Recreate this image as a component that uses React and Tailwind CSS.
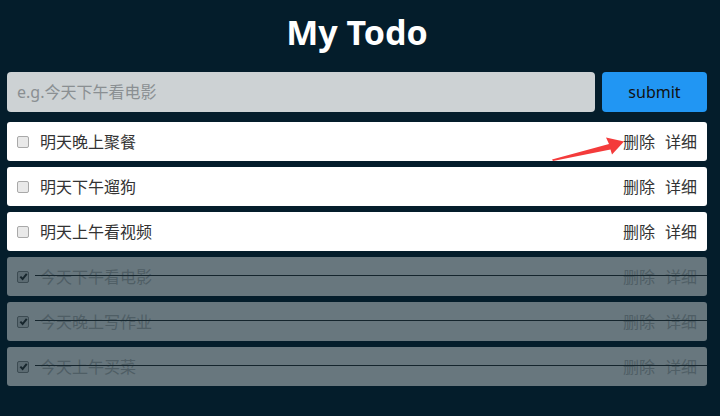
import React, { useState } from "react";

const FONT = { fontFamily: '"Noto Sans", "Noto Sans CJK SC", sans-serif' };

const initialTodos = [
  { id: 1, title: "明天晚上聚餐", done: false },
  { id: 2, title: "明天下午遛狗", done: false },
  { id: 3, title: "明天上午看视频", done: false },
  { id: 4, title: "今天下午看电影", done: true },
  { id: 5, title: "今天晚上写作业", done: true },
  { id: 6, title: "今天上午买菜", done: true },
];

const Box = ({ checked, onClick }) => (
  <span
    onClick={onClick}
    className={`flex h-[12px] w-[12px] shrink-0 items-center justify-center rounded-[2px] border ${
      checked ? "border-[#3c4b52] bg-[#5c6b72]" : "border-[#a9a9a9] bg-[#e9e9e9]"
    }`}
  >
    {checked && (
      <svg width="9" height="9" viewBox="0 0 10 10">
        <path d="M1.5 5.2 L4 7.8 L8.6 2.2" fill="none" stroke="#17262d" strokeWidth="2.2" />
      </svg>
    )}
  </span>
);

const TodoRow = ({ todo, onToggle, onDelete }) => (
  <li
    className={`relative flex h-[39px] items-center rounded-[3px] pl-[10px] pr-[10px] ${
      todo.done ? "bg-[#68777e] text-[#4f5e65]" : "bg-white text-[#333]"
    }`}
  >
    <Box checked={todo.done} onClick={onToggle} />
    <span className="ml-[11px] flex-1 text-[16px]">{todo.title}</span>
    <span className="flex gap-[10px] text-[16px]">
      <button onClick={onDelete}>删除</button>
      <button>详细</button>
    </span>
    {todo.done && (
      <div className="pointer-events-none absolute left-[28px] right-0 top-[18px] h-px bg-[#15252d]" />
    )}
  </li>
);

export default function App() {
  const [todos, setTodos] = useState(initialTodos);
  const [text, setText] = useState("");

  const add = () => {
    if (!text.trim()) return;
    setTodos([{ id: Date.now(), title: text, done: false }, ...todos]);
    setText("");
  };

  return (
    <div className="relative min-h-[416px] w-[720px] bg-[#041d2b]" style={FONT}>
      <div className="w-[714px] pl-[7px]">
        <h1 className="flex h-[72px] w-[700px] items-center justify-center pb-[8px] text-[34px] font-bold text-white">
          My Todo
        </h1>
        <div className="flex gap-[7px]">
          <input
            value={text}
            onChange={(e) => setText(e.target.value)}
            placeholder="e.g.今天下午看电影"
            className="h-[40px] w-[588px] rounded-[4px] bg-[#cdd2d4] px-[10px] text-[16px] text-[#333] outline-none placeholder:text-[#8a8f92]"
          />
          <button
            onClick={add}
            className="h-[40px] w-[105px] rounded-[4px] bg-[#2196f3] text-[16px] text-[#111]"
          >
            submit
          </button>
        </div>
        <ul className="mt-[10px] flex w-[700px] flex-col gap-[6px]">
          {todos.map((t) => (
            <TodoRow
              key={t.id}
              todo={t}
              onToggle={() =>
                setTodos(todos.map((x) => (x.id === t.id ? { ...x, done: !x.done } : x)))
              }
              onDelete={() => setTodos(todos.filter((x) => x.id !== t.id))}
            />
          ))}
        </ul>
      </div>

      {/* red annotation arrow */}
      <svg className="pointer-events-none absolute left-0 top-0" width="720" height="416">
        <path d="M552 159.5 L609 144 L606 137.5 L624 141.5 L612 154.5 L610.5 149.5 L553 161 Z" fill="#f43b3b" />
      </svg>
    </div>
  );
}
